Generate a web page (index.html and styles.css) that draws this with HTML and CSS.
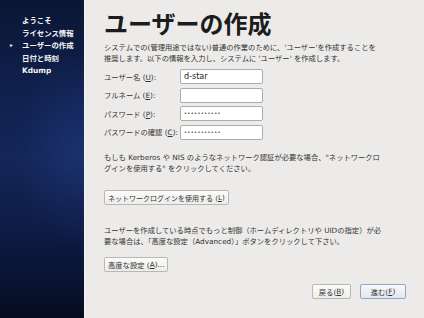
FILE: index.html
```html
<!DOCTYPE html>
<html lang="ja">
<head>
<meta charset="utf-8">
<link rel="stylesheet" href="styles.css">
</head>
<body>
<nav class="sidebar">
  <div class="step"><span class="mark"></span>ようこそ</div>
  <div class="step"><span class="mark"></span>ライセンス情報</div>
  <div class="step current"><span class="mark">▸</span>ユーザーの作成</div>
  <div class="step"><span class="mark"></span>日付と時刻</div>
  <div class="step"><span class="mark"></span>Kdump</div>
</nav>
<main class="content">
  <h1 class="title">ユーザーの作成</h1>
  <p class="text intro">システムでの(管理用途ではない)普通の作業のために、'ユーザー'を作成することを<br>推奨します。以下の情報を入力し、システムに 'ユーザー' を作成します。</p>
  <div class="form">
    <label class="label">ユーザー名 (<u>U</u>):</label>
    <div class="field">d-star</div>
    <label class="label">フルネーム (<u>E</u>):</label>
    <div class="field"></div>
    <label class="label">パスワード (<u>P</u>):</label>
    <div class="field dots">•••••••••••</div>
    <label class="label">パスワードの確認 (<u>C</u>):</label>
    <div class="field dots">•••••••••••</div>
  </div>
  <p class="text net">もしも Kerberos や NIS のようなネットワーク認証が必要な場合、"ネットワークロ<br>グインを使用する" をクリックしてください。</p>
  <div class="btn net-btn">ネットワークログインを使用する (<u>L</u>)</div>
  <p class="text adv">ユーザーを作成している時点でもっと制御（ホームディレクトリや UIDの指定）が必<br>要な場合は、「高度な設定（Advanced）」ボタンをクリックして下さい。</p>
  <div class="btn adv-btn">高度な設定 (<u>A</u>)...</div>
  <div class="nav">
    <div class="btn back">戻る(<u>B</u>)</div>
    <div class="btn next">進む(<u>F</u>)</div>
  </div>
</main>
</body>
</html>
```
FILE: styles.css
```css
html, body {
  margin: 0;
  padding: 0;
}
body {
  width: 424px;
  height: 318px;
  display: flex;
  overflow: hidden;
  font-family: "DejaVu Sans", "Noto Sans CJK JP", sans-serif;
  color: #2a2a2a;
}
.sidebar {
  width: 84px;
  flex: none;
  box-sizing: border-box;
  padding: 13px 0 0 10px;
  background:
    radial-gradient(ellipse 90px 140px at 80px 150px, rgba(40,70,150,0.35), rgba(0,0,0,0) 70%),
    linear-gradient(180deg, #0b1634 0%, #10214f 30%, #142658 50%, #0d1a42 75%, #060c22 100%);
}
.step {
  display: flex;
  align-items: center;
  height: 12.7px;
  font-size: 7.4px;
  font-weight: bold;
  color: #f4f4f4;
  white-space: nowrap;
}
.mark {
  width: 12px;
  flex: none;
  font-size: 6px;
  color: #e0e0e0;
}
.content {
  flex: 1;
  box-sizing: border-box;
  padding: 9px 18px 0 19px;
  background: #ecebe9;
  border-left: 1px solid #f5f4f2;
  display: flex;
  flex-direction: column;
  align-items: flex-start;
}
.title {
  margin: 0;
  font-size: 24px;
  line-height: 28px;
  font-weight: bold;
  color: #1c1c1c;
  font-family: "Noto Sans CJK JP", sans-serif;
}
.text {
  margin: 0;
  font-size: 7.3px;
  line-height: 11px;
  color: #333;
  white-space: nowrap;
}
.intro { margin-top: 4.5px; }
.form {
  margin-top: 5.5px;
  display: grid;
  grid-template-columns: 76px 83px;
  row-gap: 3.5px;
  align-items: center;
}
.label {
  font-size: 7.3px;
  color: #333;
  white-space: nowrap;
}
.field {
  height: 15px;
  box-sizing: border-box;
  background: #fff;
  border: 1px solid #aeaca8;
  border-radius: 2px;
  font-size: 8px;
  line-height: 13px;
  padding-left: 3px;
  color: #222;
}
.dots {
  font-size: 5px;
  letter-spacing: 0.4px;
}
.net { margin-top: 12px; }
.btn {
  box-sizing: border-box;
  height: 15px;
  display: flex;
  align-items: center;
  justify-content: center;
  font-size: 7.3px;
  color: #333;
  background: linear-gradient(180deg, #fbfbfa 0%, #eeedeb 100%);
  border: 1px solid #b9b7b3;
  border-radius: 2px;
  white-space: nowrap;
}
.net-btn {
  margin-top: 16.5px;
  padding: 0 3px;
  font-size: 7px;
}
.adv { margin-top: 19.5px; }
.adv-btn {
  margin-top: 10.5px;
  padding: 0 3px;
}
.nav {
  margin-top: 12px;
  align-self: stretch;
  display: flex;
  justify-content: flex-end;
  gap: 9px;
}
.back { width: 39px; }
.next {
  width: 46px;
  border-color: #93a6c4;
  background: linear-gradient(180deg, #f6f8fb 0%, #e2e8f0 100%);
}
```
